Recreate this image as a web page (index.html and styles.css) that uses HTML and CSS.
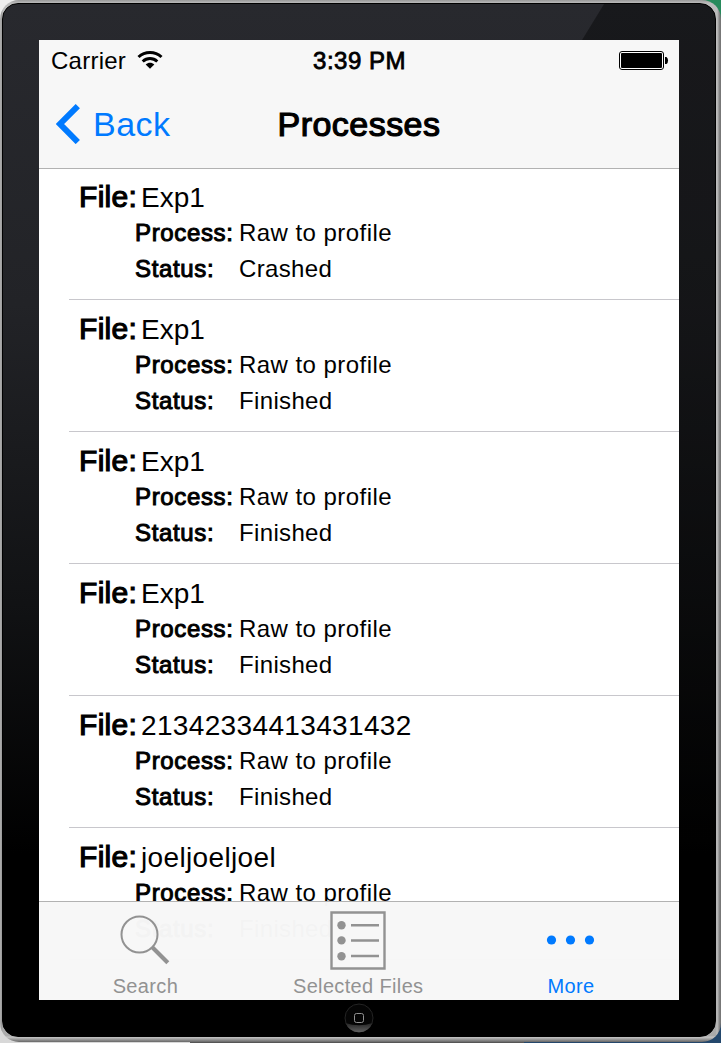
FILE: index.html
```html
<!DOCTYPE html>
<html lang="en">
<head>
<meta charset="utf-8">
<title>Processes</title>
<link rel="stylesheet" href="styles.css">
</head>
<body>
<div class="device">
 <div class="bezel">
  <main class="screen">
   <header class="top">
    <div class="status">
     <div class="carrier"><span class="carrier-name">Carrier</span>
      <svg width="26" height="20" viewBox="0 0 26 20"><g fill="none" stroke="#000" stroke-width="3"><path d="M1.500 7C8 .9 18 .9 24.500 7"/><path d="M5.700 11.500C10 7.600 16 7.600 20.300 11.500"/></g><path d="M8.700 14.500C11.200 12.300 14.800 12.300 17.300 14.500L13 18.800Z"/></svg>
     </div>
     <div class="time">3:39 PM</div>
     <div class="power"><svg width="50" height="20" viewBox="0 0 50 20"><rect x=".5" y=".5" width="44" height="18" rx="2.500" fill="#fff" stroke="#000"/><rect x="2" y="2" width="41" height="15" rx="1"/><path d="M46 6h1.500q1.500 1 1.500 3.500t-1.500 3.500H46z"/></svg></div>
    </div>
    <nav class="nav">
     <a class="back"><svg width="24" height="40" viewBox="0 0 24 40"><path d="M21.800 2.200 4 20 21.800 38" fill="none" stroke="#007aff" stroke-width="6"/></svg><span>Back</span></a>
     <h1 class="title">Processes</h1>
     <span></span>
    </nav>
   </header>
   <section class="list">
    <article class="row"><div class="file"><b>File:</b><span class="short">Exp1</span></div><div class="detail"><b>Process:</b><span>Raw to profile</span></div><div class="detail"><b>Status:</b><span class="state">Crashed</span></div></article>
    <article class="row"><div class="file"><b>File:</b><span class="short">Exp1</span></div><div class="detail"><b>Process:</b><span>Raw to profile</span></div><div class="detail"><b>Status:</b><span class="state">Finished</span></div></article>
    <article class="row"><div class="file"><b>File:</b><span class="short">Exp1</span></div><div class="detail"><b>Process:</b><span>Raw to profile</span></div><div class="detail"><b>Status:</b><span class="state">Finished</span></div></article>
    <article class="row"><div class="file"><b>File:</b><span class="short">Exp1</span></div><div class="detail"><b>Process:</b><span>Raw to profile</span></div><div class="detail"><b>Status:</b><span class="state">Finished</span></div></article>
    <article class="row"><div class="file"><b>File:</b><span>21342334413431432</span></div><div class="detail"><b>Process:</b><span>Raw to profile</span></div><div class="detail"><b>Status:</b><span class="state">Finished</span></div></article>
    <article class="row"><div class="file"><b>File:</b><span>joeljoeljoel</span></div><div class="detail"><b>Process:</b><span>Raw to profile</span></div><div class="detail"><b>Status:</b><span class="state">Finished</span></div></article>
   </section>
   <footer class="tabs">
    <a class="tab"><svg width="60" height="60" viewBox="0 0 60 60"><g fill="none" stroke="#929292"><circle cx="24.500" cy="24.500" r="18" stroke-width="2"/><path d="m37.300 37.300 15.500 15.500" stroke-width="4.200"/></g></svg><span>Search</span></a>
    <a class="tab"><svg width="60" height="60" viewBox="0 0 60 60"><g fill="none" stroke="#929292" stroke-width="2.400"><path d="M3.500 2.500h53v56h-53z"/><path d="M23 15.200h28M23 30.500h28M23 46h28"/></g><g fill="#929292"><circle cx="13.500" cy="15.200" r="4.200"/><circle cx="13.500" cy="30.400" r="4.200"/><circle cx="13.500" cy="46.300" r="4.200"/></g></svg><span>Selected Files</span></a>
    <a class="tab active"><svg width="60" height="60" viewBox="0 0 60 60"><g fill="#007aff"><circle cx="10.500" cy="30" r="4.600"/><circle cx="29.500" cy="30" r="4.600"/><circle cx="48.500" cy="30" r="4.600"/></g></svg><span>More</span></a>
   </footer>
  </main>
  <div class="home"><svg width="30" height="30" viewBox="0 0 30 30"><defs><linearGradient id="rim" x2="0" y2="1"><stop offset="0" stop-color="#242424"/><stop offset="1" stop-color="#606060"/></linearGradient></defs><circle cx="15" cy="15" r="14" fill="#050505" stroke="#242424"/><path d="M1.500 20Q15 24.500 28.500 20A14.500 14.500 0 0 1 1.500 20Z" fill="url(#rim)"/><rect x="10.500" y="10.500" width="9" height="9" rx="2" fill="none" stroke="#929292"/></svg></div>
 </div>
</div>
</body>
</html>
```
FILE: styles.css
```css
* { box-sizing: border-box; }
body { margin: 0; height: 1043px; overflow: hidden; font-family: "Liberation Sans", Arial, sans-serif; color: #000;
 background: linear-gradient(90deg, #d8d8d8 0 190px, #555 190px 524px, #23476c 524px) 0 100% / 100% 35px no-repeat,
 linear-gradient(90deg, #eee 50%, #278a5c 50%); }
.device { width: 721px; height: 1042px; padding: 3px 5px 5px 2px; border-radius: 19px;
 background: linear-gradient(90deg, #bbb, #999 1px, transparent 3px 716px, #c0c0c0 717px, #777 720px),
 linear-gradient(#999, #bbb 3px, #aaa 1036px, #c8c8c8 1037px, #666 1042px); }
.bezel { height: 1034px; border: 1px solid #000; border-radius: 16px; padding: 36px 36px 0; overflow: hidden;
 background: linear-gradient(121.500deg, rgba(0,0,0,0) 0 512px, rgba(0,0,0,.4) 513px), linear-gradient(#28292e, #222327 300px, #111214 600px, #000 850px); }
.screen { width: 640px; height: 960px; background: #fff; overflow: hidden; display: flex; flex-direction: column; }
.top { height: 128px; flex: none; background: #f7f7f7; box-shadow: 0 1px #b2b2b2; z-index: 1; }
.status { height: 40px; display: grid; grid-template-columns: 1fr auto 1fr; padding: 0 11px 0 12px; line-height: 41px; font-size: 24px; }
.carrier { display: flex; gap: 11px; }
.carrier-name { letter-spacing: .25px; }
.carrier svg { margin-top: 10px; }
.time { letter-spacing: .5px; -webkit-text-stroke: .8px #000; }
.power { display: flex; justify-content: flex-end; padding-top: 11px; margin-right: -1px; }
.nav { height: 88px; display: grid; grid-template-columns: 1fr auto 1fr; padding: 0 17px; line-height: 88px; }
.back { display: flex; color: #007aff; font-size: 34px; letter-spacing: .5px; gap: 13px; }
.back svg { margin-top: 24px; }
.title { margin: 0; font-size: 34px; font-weight: 400; letter-spacing: .45px; -webkit-text-stroke: 1.200px #000; }
.list { height: 733px; flex: none; }
.row { height: 132px; margin-left: 30px; padding: 11px 0 0 10px; border-bottom: 1px solid #c8c7cc; }
.file, .detail { display: flex; height: 36px; line-height: 36px; white-space: nowrap; }
.file { font-size: 28px; letter-spacing: .35px; }
.file b { width: 62px; font-size: 30px; font-weight: 400; letter-spacing: .3px; -webkit-text-stroke: 1.200px #000; }
.file span { padding-top: 1px; }
.file .short { letter-spacing: 0; }
.detail { margin-left: 56px; font-size: 24px; letter-spacing: .45px; }
.detail .state { letter-spacing: .35px; }
.detail b { width: 104px; font-weight: 400; letter-spacing: .65px; -webkit-text-stroke: 1px #000; }
.tabs { height: 99px; flex: none; display: grid; grid-template-columns: repeat(3, 212.800px); background: rgba(247,247,247,.985); border-top: 1px solid #b2b2b2; z-index: 1; }
.tab { display: flex; flex-direction: column; align-items: center; padding-top: 8px; color: #929292; font-size: 20px; line-height: 32px; letter-spacing: .35px; }
.tab svg { flex: none; }
.active { color: #007aff; }
.home { width: 30px; height: 30px; margin: 3px auto 0; }
.home svg { display: block; }
```
